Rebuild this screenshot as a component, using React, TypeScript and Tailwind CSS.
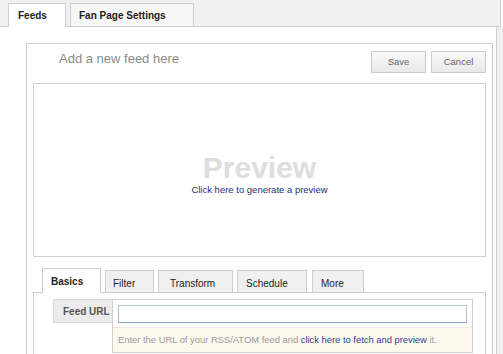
import React from "react";

export default function App() {
  const font = "font-['Liberation_Sans',Arial,sans-serif]";
  return (
    <div className={`w-[503px] h-[354px] overflow-hidden bg-white flex flex-col ${font}`}>
      {/* top tab bar */}
      <div className="h-[27px] shrink-0 w-[501px] bg-[#f0f0f0] border-b border-r border-[#cfcfcf] flex items-end pl-[8px] gap-[4px]">
        <div className="w-[58px] h-[24px] -mb-px bg-white border border-b-0 border-[#cfcfcf] flex items-center pl-[9px] pb-[1px] text-[10px] font-bold text-[#222]">
          Feeds
        </div>
        <div className="w-[124px] h-[23px] bg-[#f7f7f7] border border-b-0 border-[#cfcfcf] flex items-center pl-[8px] text-[10px] font-bold text-[#222]">
          Fan Page Settings
        </div>
      </div>

      <div className="flex flex-1 min-h-0">
        <div className="flex-1 pl-[26px] pt-[16px] pr-[3px]">
          <div className="w-[467px] h-full border-l border-t border-r border-[#cfcfcf] flex flex-col">
            {/* header */}
            <div className="flex items-start pt-[7px] pl-[32px] pr-[6px]">
              <div className="flex-1 text-[13px] leading-[15px] text-[#8a8a8a]">Add a new feed here</div>
              <div className="flex gap-[5px]">
                <button className="w-[55px] h-[22px] border border-[#cccccc] bg-gradient-to-b from-[#f9f9f9] to-[#e9e9e9] text-[9.5px] text-[#666]">
                  Save
                </button>
                <button className="w-[55px] h-[22px] border border-[#cccccc] bg-gradient-to-b from-[#f9f9f9] to-[#e9e9e9] text-[9.5px] text-[#666]">
                  Cancel
                </button>
              </div>
            </div>

            {/* preview */}
            <div className="mx-[6px] mt-[10px] h-[174px] border border-[#cfcfcf] flex flex-col items-center pt-[69px]">
              <div className="text-[30px] leading-[30px] font-bold text-[#dedede]">Preview</div>
              <div className="text-[9.5px] leading-[11px] text-[#1f2f7a] mt-[1px]">Click here to generate a preview</div>
            </div>

            {/* tabs */}
            <div className="mt-[11px] mx-[6px] flex items-end gap-[4px] pl-[9px] h-[24px]">
              <div className="w-[59px] h-[25px] -mb-px relative z-10 bg-white border border-b-0 border-[#cfcfcf] flex items-center pl-[8px] pt-[1px] text-[10px] font-bold text-[#222]">
                Basics
              </div>
              <div className="w-[49px] h-[22px] bg-[#f0f0f0] border border-b-0 border-[#cfcfcf] flex items-center pl-[7px] pt-[3px] text-[10px] text-[#222]">
                Filter
              </div>
              <div className="w-[75px] h-[22px] bg-[#f0f0f0] border border-b-0 border-[#cfcfcf] flex items-center pl-[11px] pt-[3px] text-[10px] text-[#222]">
                Transform
              </div>
              <div className="w-[70px] h-[22px] bg-[#f0f0f0] border border-b-0 border-[#cfcfcf] flex items-center pl-[8px] pt-[3px] text-[10px] text-[#222]">
                Schedule
              </div>
              <div className="w-[52px] h-[22px] ml-[1px] bg-[#f0f0f0] border border-b-0 border-[#cfcfcf] flex items-center pl-[8px] pt-[3px] text-[10px] text-[#222]">
                More
              </div>
            </div>

            {/* tab panel */}
            <div className="mx-[6px] flex-1 border-l border-t border-r border-[#cfcfcf] pt-[6px] pl-[19px]">
              <div className="flex items-start">
                <div className="w-[59px] h-[24px] bg-[#ebebeb] border border-r-0 border-[#dadada] flex items-center pl-[9px] text-[10px] font-bold text-[#555]">
                  Feed URL
                </div>
                <div className="w-[361px] h-[54px] bg-white border border-[#cfcfcf] flex flex-col">
                  <div className="px-[5px] pt-[5px] h-[27px]">
                    <div className="h-[18px] border border-[#b9c3cf] border-b-[#7fa3cc] border-l-[#a9bdd4] bg-white"></div>
                  </div>
                  <div className="flex-1 bg-[#fdf9ee] border-t border-[#efeadc] px-[5px] flex items-center text-[9.4px] text-[#999]">
                    <span>
                      Enter the URL of your RSS/ATOM feed and{" "}
                      <span className="text-[#2a3f8f]">click here to fetch and preview</span> it.
                    </span>
                  </div>
                </div>
              </div>
            </div>
          </div>
        </div>
        <div className="w-[7px] shrink-0 border-l border-[#cfcfcf] bg-[#f0f0f0]"></div>
      </div>
    </div>
  );
}
